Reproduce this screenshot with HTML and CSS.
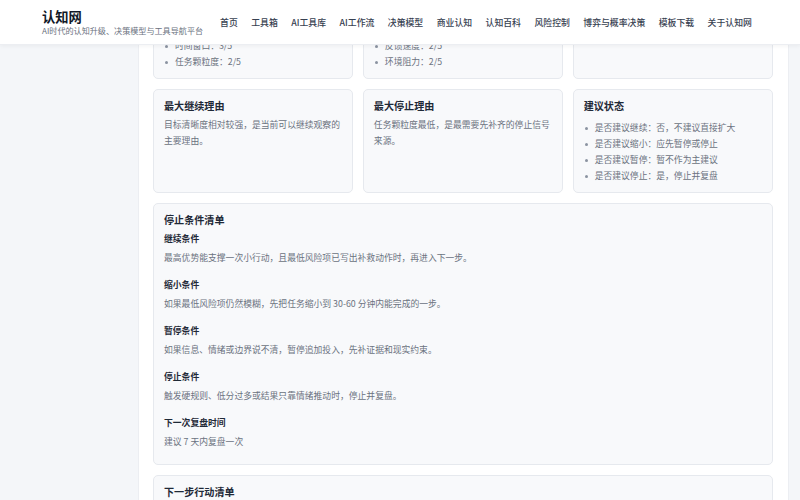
FILE: index.html
```html
<!DOCTYPE html>
<html>
<head>
    <meta charset="utf-8">
    <title>停止条件清单 - 认知网</title>
    <link rel="stylesheet" href="styles.css">
</head>
<body>
    <!-- top bar -->
    <header class="topbar">
        <div class="brand">
            <div class="brand-name">认知网</div>
            <div class="brand-sub">AI时代的认知升级、决策模型与工具导航平台</div>
        </div>
        <nav class="nav">
            <a href="#">首页</a>
            <a href="#">工具箱</a>
            <a href="#">AI工具库</a>
            <a href="#">AI工作流</a>
            <a href="#">决策模型</a>
            <a href="#">商业认知</a>
            <a href="#">认知百科</a>
            <a href="#">风险控制</a>
            <a href="#">博弈与概率决策</a>
            <a href="#">模板下载</a>
            <a href="#">关于认知网</a>
        </nav>
    </header>

    <div class="viewport">
        <div class="layout">
            <aside class="side"></aside>

            <main class="panel">
                <!-- score cards, tail end after scrolling -->
                <div class="grid3">
                    <div class="card">
                        <ul class="dots">
                            <li>时间窗口：3/5</li>
                            <li>任务颗粒度：2/5</li>
                        </ul>
                    </div>
                    <div class="card">
                        <ul class="dots">
                            <li>反馈速度：2/5</li>
                            <li>环境阻力：2/5</li>
                        </ul>
                    </div>
                    <div class="card"></div>
                </div>

                <div class="grid3">
                    <div class="card">
                        <h3 class="card-title">最大继续理由</h3>
                        <p class="card-text">目标清晰度相对较强，是当前可以继续观察的主要理由。</p>
                    </div>
                    <div class="card">
                        <h3 class="card-title">最大停止理由</h3>
                        <p class="card-text">任务颗粒度最低，是最需要先补齐的停止信号来源。</p>
                    </div>
                    <div class="card">
                        <h3 class="card-title">建议状态</h3>
                        <ul class="dots">
                            <li>是否建议继续：否，不建议直接扩大</li>
                            <li>是否建议缩小：应先暂停或停止</li>
                            <li>是否建议暂停：暂不作为主建议</li>
                            <li>是否建议停止：是，停止并复盘</li>
                        </ul>
                    </div>
                </div>

                <section class="card block">
                    <h3 class="card-title">停止条件清单</h3>
                    <h4 class="cond">继续条件</h4>
                    <p class="cond-text">最高优势能支撑一次小行动，且最低风险项已写出补救动作时，再进入下一步。</p>
                    <h4 class="cond">缩小条件</h4>
                    <p class="cond-text">如果最低风险项仍然模糊，先把任务缩小到 30-60 分钟内能完成的一步。</p>
                    <h4 class="cond">暂停条件</h4>
                    <p class="cond-text">如果信息、情绪或边界说不清，暂停追加投入，先补证据和现实约束。</p>
                    <h4 class="cond">停止条件</h4>
                    <p class="cond-text">触发硬规则、低分过多或结果只靠情绪推动时，停止并复盘。</p>
                    <h4 class="cond">下一次复盘时间</h4>
                    <p class="cond-text">建议 7 天内复盘一次</p>
                </section>

                <section class="card block">
                    <h3 class="card-title">下一步行动清单</h3>
                </section>
            </main>
        </div>
    </div>
</body>
</html>
```

FILE: styles.css
```css
* { box-sizing: border-box; }
html, body { margin: 0; padding: 0; }
body { font-family: "Noto Sans CJK SC", "Noto Sans", sans-serif; background-color: #f4f6f9; color: #1f2937; height: 500px; overflow: hidden; }

.topbar { position: relative; z-index: 2; height: 45px; display: flex; align-items: center; padding: 0 0 0 42px; background-color: #fff; border-bottom: 1px solid #eceef2; box-shadow: 0 1px 4px rgba(0,0,0,0.05); }
.brand { display: flex; flex-direction: column; }
.brand-name { font-size: 13.3px; line-height: 17px; font-weight: 700; color: #111827; }
.brand-sub { font-size: 8.1px; line-height: 11px; color: #6b7280; }
.nav { display: flex; gap: 13.5px; margin-left: 17px; margin-top: 1px; }
.nav a { font-size: 8.85px; line-height: 14px; color: #374151; text-decoration: none; font-weight: 500; }

.viewport { height: 455px; overflow: hidden; }
.layout { display: flex; }
.side { width: 138px; flex-shrink: 0; }
.panel { width: 651px; margin-top: -37px; padding: 14px 15px 14px 14px; background-color: #fff; border: 1px solid #eceef2; display: flex; flex-direction: column; gap: 10px; }

.grid3 { display: grid; grid-template-columns: repeat(3, 1fr); column-gap: 9.5px; }
.card { background-color: #f8f9fb; border: 1px solid #e6e9ee; border-radius: 5px; padding: 8px 10px; }
.card-title { margin: 0 0 3px 0; font-size: 10.1px; line-height: 16px; font-weight: 700; color: #1f2937; }
.card-text { margin: 0; font-size: 8.8px; line-height: 16px; color: #6b7280; }

.dots { list-style: none; margin: 6px 0 0 0; padding: 0 0 0 11px; }
.dots li { position: relative; font-size: 8.8px; line-height: 16px; color: #6b7280; }
.dots li::before { content: ""; position: absolute; left: -10px; top: 7px; width: 3px; height: 3px; border-radius: 50%; background-color: #8b93a1; }

.block { padding-bottom: 14px; }
.cond { margin: 0; font-size: 8.8px; line-height: 16px; font-weight: 700; color: #1f2937; }
.cond-text { margin: 3px 0 11px 0; font-size: 8.8px; line-height: 16px; color: #6b7280; }
.cond-text:last-child { margin-bottom: 0; }
```
